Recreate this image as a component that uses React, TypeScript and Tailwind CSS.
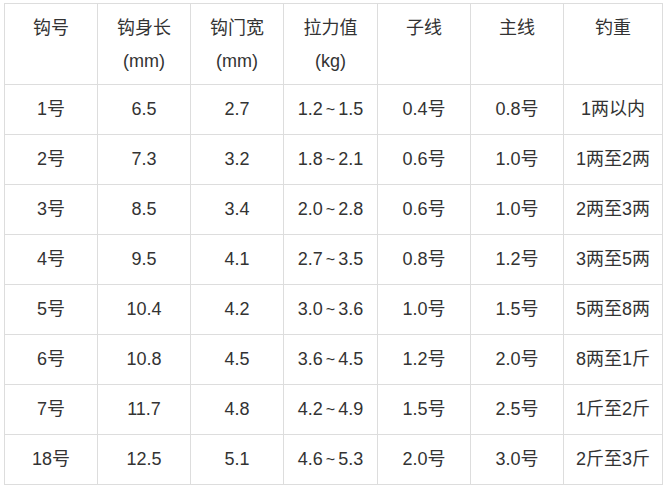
import React from 'react';

// 鱼钩规格表
const headers = ['钩号', '钩身长\n(mm)', '钩门宽\n(mm)', '拉力值\n(kg)', '子线', '主线', '钓重'];

const rows = [
  ['1号', '6.5', '2.7', '1.2~1.5', '0.4号', '0.8号', '1两以内'],
  ['2号', '7.3', '3.2', '1.8~2.1', '0.6号', '1.0号', '1两至2两'],
  ['3号', '8.5', '3.4', '2.0~2.8', '0.6号', '1.0号', '2两至3两'],
  ['4号', '9.5', '4.1', '2.7~3.5', '0.8号', '1.2号', '3两至5两'],
  ['5号', '10.4', '4.2', '3.0~3.6', '1.0号', '1.5号', '5两至8两'],
  ['6号', '10.8', '4.5', '3.6~4.5', '1.2号', '2.0号', '8两至1斤'],
  ['7号', '11.7', '4.8', '4.2~4.9', '1.5号', '2.5号', '1斤至2斤'],
  ['18号', '12.5', '5.1', '4.6~5.3', '2.0号', '3.0号', '2斤至3斤'],
];

// range values get a small spaced tilde like the source page
const renderCell = (cell: string) => {
  if (!cell.includes('~')) return cell;
  const [a, b] = cell.split('~');
  return (
    <>
      {a}
      <span className="mx-[3px] text-[16px]">~</span>
      {b}
    </>
  );
};

export default function App() {
  return (
    <div className="w-[668px] h-[486px] bg-white pt-[3px] pl-[4px] font-['Liberation_Sans','Noto_Sans_CJK_SC',sans-serif] text-[18px] text-[#333]">
      <div className="grid w-[659px] grid-cols-[92px_92px_92px_93px_92px_92px_98px] gap-px bg-[#dddddd] p-px">
        {headers.map((h) => (
          <div key={h} className="h-[80px] bg-white pt-[8px] text-center leading-[33px] whitespace-pre-line">
            {h}
          </div>
        ))}
        {rows.map((row) =>
          row.map((cell, i) => (
            <div key={row[0] + i} className="h-[49px] bg-white flex items-center justify-center">
              {renderCell(cell)}
            </div>
          ))
        )}
      </div>
    </div>
  );
}
